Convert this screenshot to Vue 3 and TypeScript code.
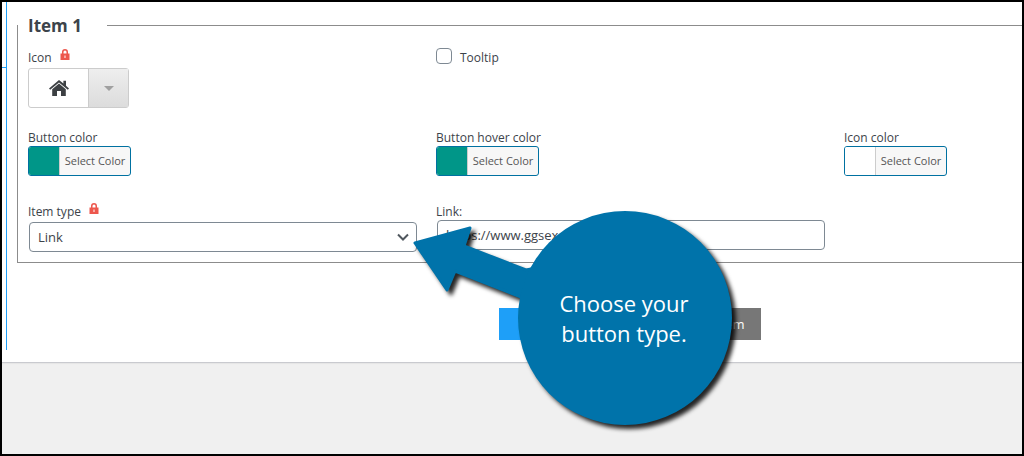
<script setup lang="ts">
import { ref } from 'vue'

const tooltip = ref(false)
const itemType = ref('link')
const link = ref('https://www.ggsexample.com')
const teal = '#009688'
const white = '#ffffff'
</script>

<template>
  <div class="frame">
    <main class="panel">
      <div class="rail"></div>
      <form class="editor" @submit.prevent>
        <fieldset class="item">
          <legend>Item 1</legend>
          <div class="grid">
            <div class="field icon-field">
              <div class="label-row">
                <span id="icon-label">Icon</span>
                <svg class="lock" viewBox="0 0 10 13" aria-hidden="true">
                  <path fill="#ed574d" fill-rule="evenodd" d="M.5 5.500H2V4a3 3 0 0 1 6 0v1.500h1.500V12h-9zM3.500 5.500h3V4a1.500 1.500 0 0 0-3 0zM4.500 7.500V10h1V7.500z" />
                </svg>
              </div>
              <button type="button" class="picker" aria-labelledby="icon-label">
                <span class="picked">
                  <svg width="20" height="16" viewBox="0 0 20 16">
                    <path fill="#3c4043" d="M10 0 0 8.400 1.200 9.700 10 2.400l8.800 7.300L20 8.400l-3-2.600V.8h-2.600v2.800z" />
                    <path fill="#3c4043" d="M10 3.600 3.200 9.300V16H8v-5h4v5h4.800V9.300z" />
                  </svg>
                </span>
                <span class="arrow"><span class="caret"></span></span>
              </button>
            </div>
            <label class="check">
              <input v-model="tooltip" type="checkbox" />
              <span>Tooltip</span>
            </label>
            <div></div>

            <div class="field">
              <label class="label-row" for="button-color">Button color</label>
              <button id="button-color" type="button" class="color">
                <span class="swatch" :style="{ background: teal }"></span><span class="color-text">Select Color</span>
              </button>
            </div>
            <div class="field">
              <label class="label-row" for="hover-color">Button hover color</label>
              <button id="hover-color" type="button" class="color">
                <span class="swatch" :style="{ background: teal }"></span><span class="color-text">Select Color</span>
              </button>
            </div>
            <div class="field">
              <label class="label-row" for="icon-color">Icon color</label>
              <button id="icon-color" type="button" class="color">
                <span class="swatch" :style="{ background: white }"></span><span class="color-text">Select Color</span>
              </button>
            </div>

            <div class="field type-field">
              <label class="label-row" for="item-type">
                Item type
                <svg class="lock" viewBox="0 0 10 13" aria-hidden="true">
                  <path fill="#ed574d" fill-rule="evenodd" d="M.5 5.500H2V4a3 3 0 0 1 6 0v1.500h1.500V12h-9zM3.500 5.500h3V4a1.500 1.500 0 0 0-3 0zM4.500 7.500V10h1V7.500z" />
                </svg>
              </label>
              <div class="select-wrap">
                <select id="item-type" v-model="itemType">
                  <option value="link">Link</option>
                </select>
                <svg class="chevron" width="12" height="8" viewBox="0 0 12 8" aria-hidden="true">
                  <path d="M1 1.500 6 6.500l5-5" fill="none" stroke="#50575e" stroke-width="2" />
                </svg>
              </div>
            </div>
            <div class="field">
              <label class="label-row" for="link">Link:</label>
              <div class="select-wrap">
                <input id="link" v-model="link" class="text" type="text" />
              </div>
            </div>
          </div>
        </fieldset>
        <div class="actions">
          <button type="button" class="add">Add item</button>
          <button type="button" class="remove">Remove item</button>
        </div>
      </form>
    </main>

    <aside class="callout">
      <svg class="shape" width="350" height="240" viewBox="0 0 350 240" aria-hidden="true">
        <path fill="#0073aa" d="M15 43 70 28 64 46 126 70l5-1 10 40-20-12L55 71 47 90z" stroke="#0073aa" stroke-width="3" stroke-linejoin="round" />
        <circle cx="225" cy="118" r="107" fill="#0073aa" />
      </svg>
      <p>Choose your<br />button type.</p>
    </aside>
  </div>
</template>

<style>
body {
  margin: 0;
}
</style>

<style scoped>
.frame {
  position: relative;
  box-sizing: border-box;
  min-height: 100vh;
  border: 2px solid #000;
  background: #f0f0f0;
  overflow: hidden;
  color: #3c434a;
  font: 13px/18px "Open Sans", "Noto Sans", sans-serif;
}
.frame * {
  box-sizing: border-box;
}
button,
input,
select {
  margin: 0;
  font: inherit;
  color: inherit;
}
.panel {
  display: flex;
  align-items: flex-start;
  padding-bottom: 12px;
  border-bottom: 1px solid #c9cacf;
  background: #fff;
  box-shadow: 0 1px 1px rgba(0, 0, 0, 0.04);
}
.rail {
  width: 5px;
  align-self: stretch;
  border-right: 1px solid #1e9ff8;
  background: linear-gradient(#1e9ff8, #1e9ff8) 0 65px / 100% 1px no-repeat;
}
.editor {
  flex: 1;
  min-width: 0;
  padding: 10px 0 10px 10px;
}
.item {
  min-width: 0;
  margin: 0;
  padding: 0 0 10px;
  border: 1px solid #8c8c8c;
  border-right: 0;
}
legend {
  padding: 2px 25px 0 10px;
  font-size: 17px;
  line-height: 24px;
  font-weight: 700;
}
.grid {
  display: grid;
  grid-template-columns: 389fr 389fr 178fr;
  grid-template-rows: 80px 74px auto;
  column-gap: 19px;
  padding: 10px 0 0 10px;
}
.label-row,
.check {
  display: flex;
  gap: 8px;
  height: 18px;
  font-size: 12px;
  line-height: 20px;
  white-space: nowrap;
}
.lock {
  width: 10px;
  height: 13px;
}
.icon-field .label-row,
.type-field .label-row {
  height: 20px;
}
.picker {
  display: flex;
  width: 101px;
  height: 40px;
  padding: 0;
  border: 1px solid #ccc;
  border-radius: 3px;
  background: #fff;
}
.picked {
  display: flex;
  flex: 1;
  height: 100%;
  align-items: center;
  justify-content: center;
}
.arrow {
  display: flex;
  width: 40px;
  height: 100%;
  align-items: center;
  justify-content: center;
  border-left: 1px solid #ccc;
  background: linear-gradient(#eee, #dcdcdc);
}
.caret {
  border: 5px solid transparent;
  border-top-color: #a0a0a0;
  border-bottom: 0;
}
.check input {
  width: 16px;
  height: 16px;
  appearance: none;
  border: 1px solid #7e8993;
  border-radius: 4px;
  background: #fff;
}
.check input:checked {
  background: #0073aa;
}
.color {
  display: flex;
  width: 103px;
  height: 30px;
  padding: 0;
  border: 1px solid #0071a1;
  border-radius: 3px;
  background: #f7f7f7;
  overflow: hidden;
}
.swatch {
  width: 30px;
  height: 28px;
}
.color-text {
  flex: 1;
  border-left: 1px solid #ccc;
  color: #555;
  font-size: 11px;
  line-height: 28px;
  text-align: center;
  white-space: nowrap;
}
.select-wrap {
  position: relative;
  padding-left: 1px;
}
select,
.text {
  display: block;
  width: 100%;
  height: 30px;
  border: 1px solid #7e8993;
  border-radius: 4px;
  background: #fff;
}
select {
  padding: 0 28px 0 8px;
  appearance: none;
}
.chevron {
  position: absolute;
  top: 11px;
  right: 8px;
}
.text {
  padding: 0 8px;
}
.actions {
  display: flex;
  justify-content: center;
  gap: 8px;
  padding: 45px 0 0 220px;
}
.actions button {
  height: 32px;
  padding: 0;
  border: 0;
  color: #fff;
}
.actions .add {
  width: 122px;
  background: #1e9ff8;
}
.actions .remove {
  width: 132px;
  padding-right: 16px;
  background: #777;
  text-align: right;
}
.callout {
  position: absolute;
  top: 198px;
  left: 398px;
  width: 350px;
  height: 240px;
}
.shape {
  display: block;
  filter: drop-shadow(4px 4px 2px rgba(0, 0, 0, 0.85));
}
.callout p {
  position: absolute;
  top: 88px;
  left: 117px;
  width: 214px;
  margin: 0;
  color: #fff;
  font-size: 22px;
  line-height: 30px;
  text-align: center;
}
</style>
